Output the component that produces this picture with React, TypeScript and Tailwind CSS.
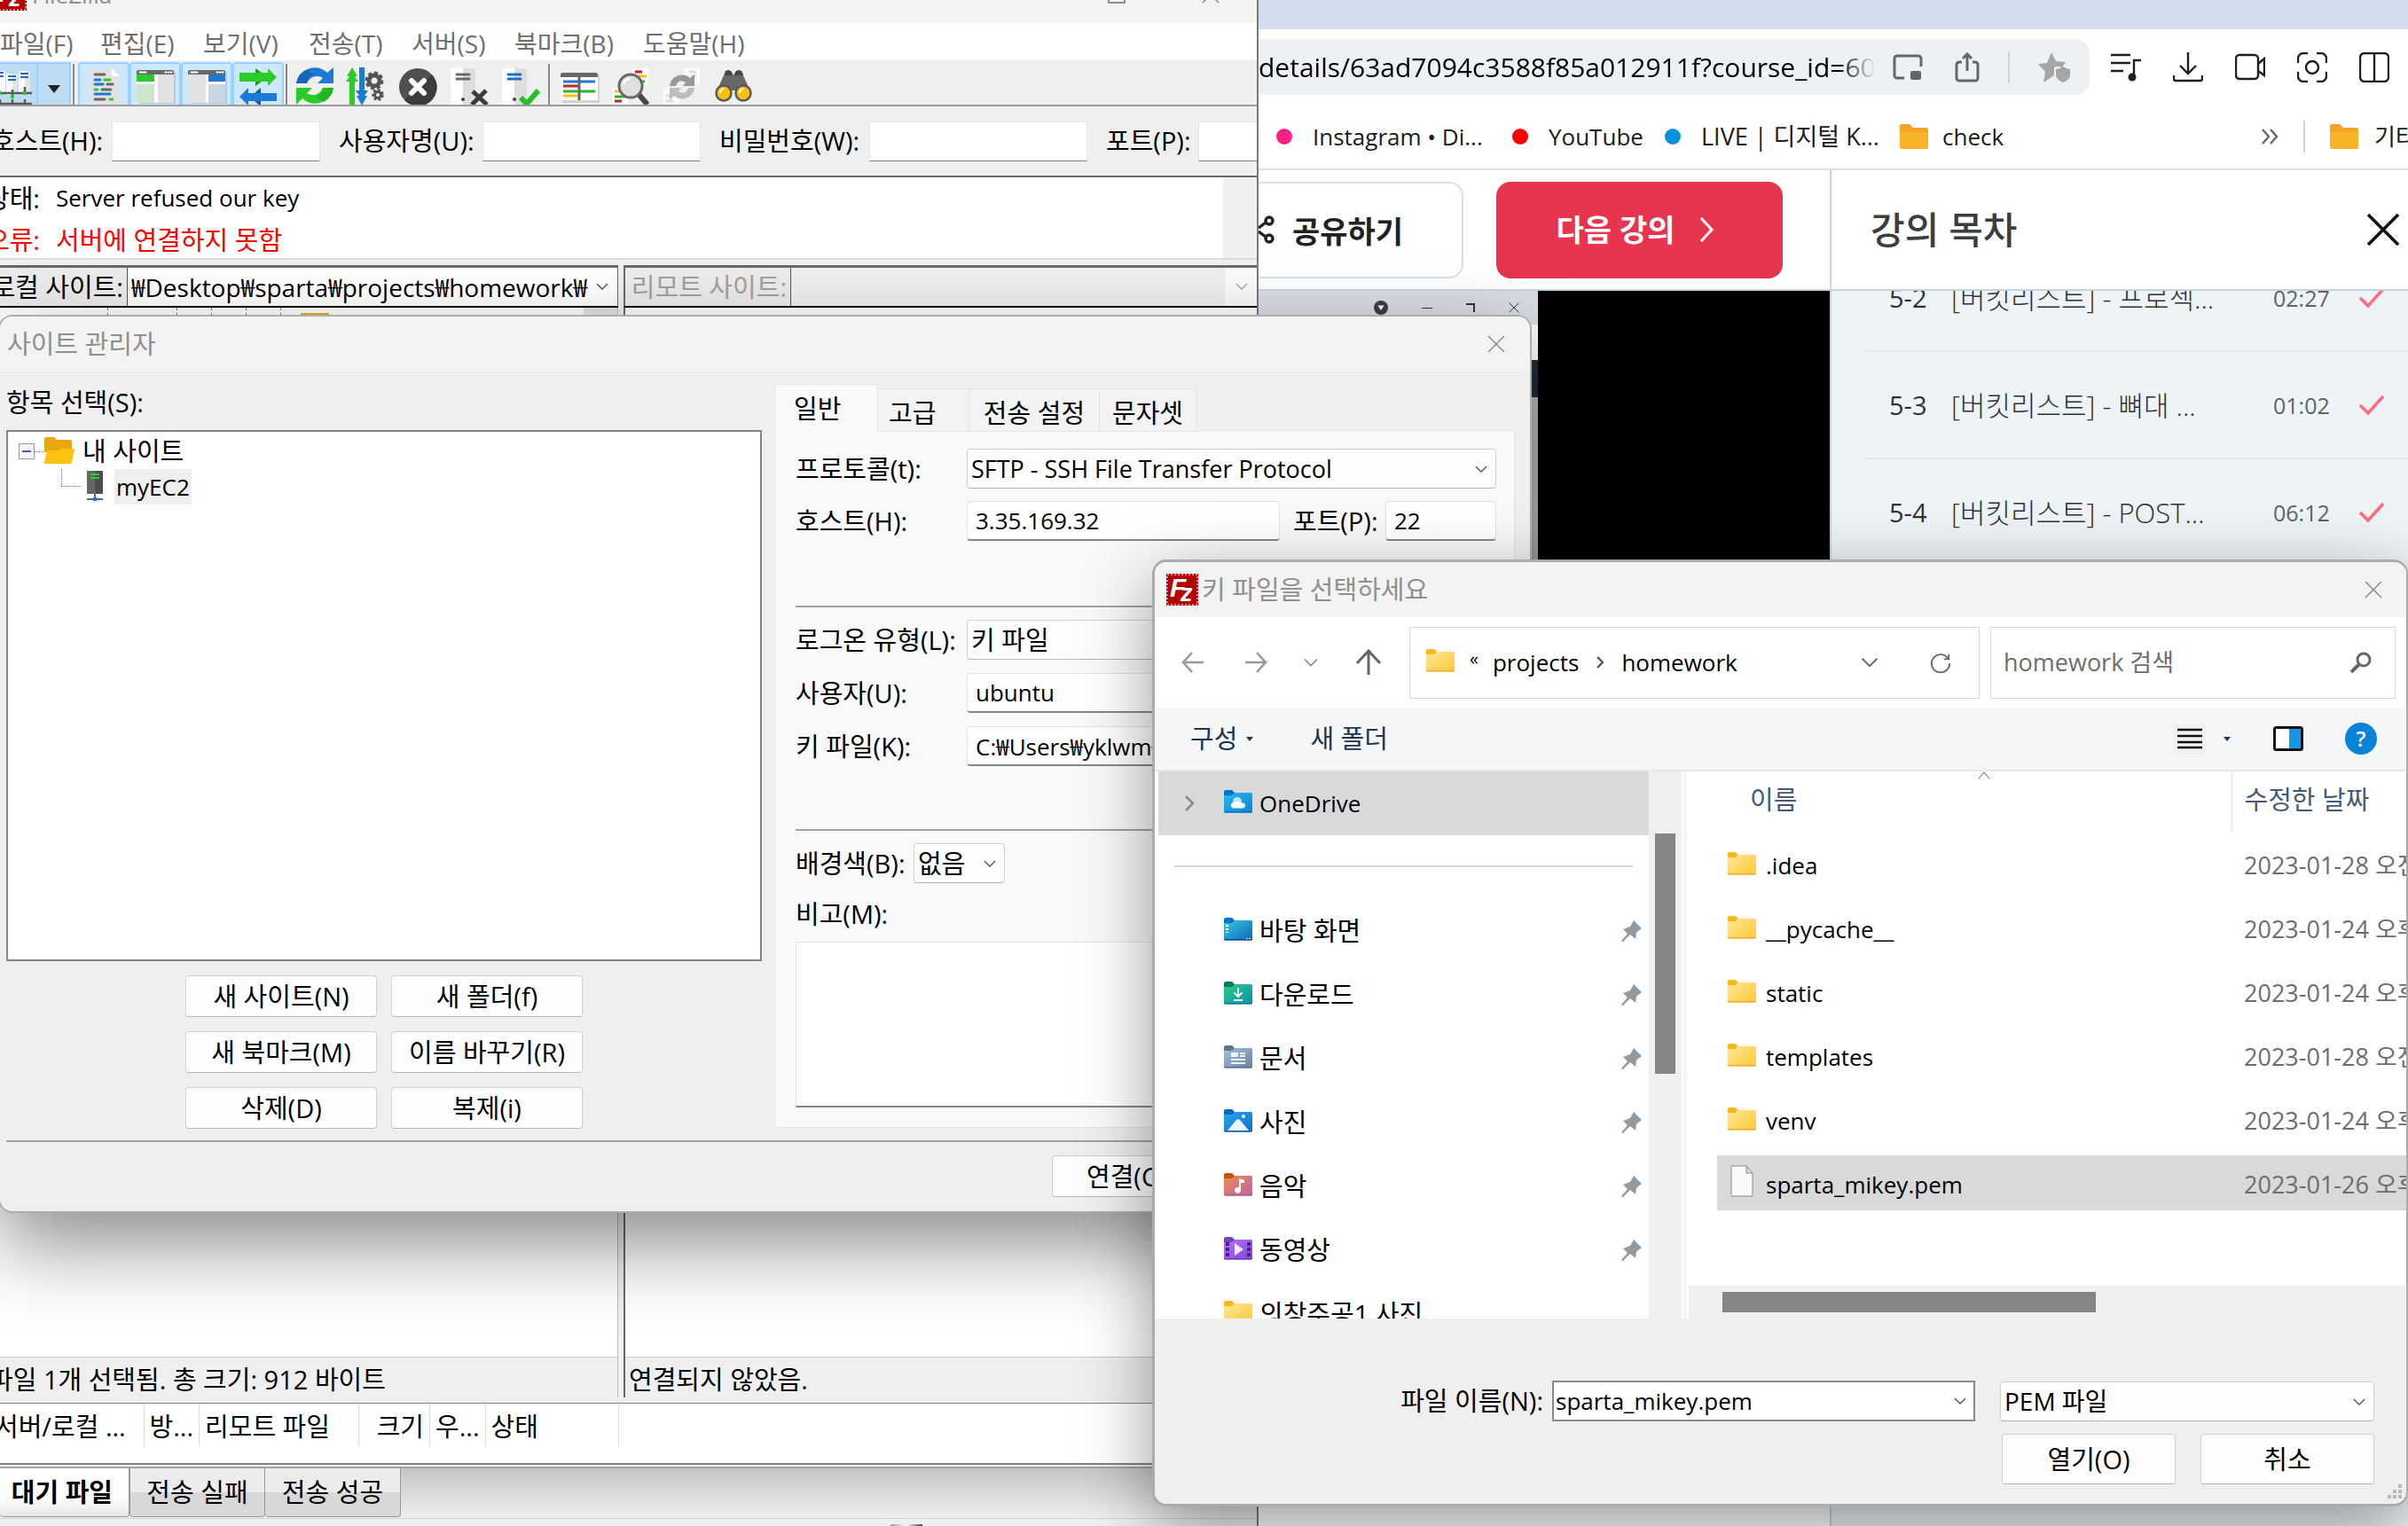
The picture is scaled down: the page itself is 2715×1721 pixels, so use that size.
import type { ReactNode } from "react";

interface TreeItem {
  label: string;
  kind: FolderKind;
  pinned: boolean;
}

type FolderKind = "yellow" | "onedrive" | "desktop" | "download" | "document" | "picture" | "music" | "video";

const menus = [
  { label: "파일(F)", width: "w-[113px]" },
  { label: "편집(E)", width: "w-[116px]" },
  { label: "보기(V)", width: "w-[119px]" },
  { label: "전송(T)", width: "w-[116px]" },
  { label: "서버(S)", width: "w-[116px]" },
  { label: "북마크(B)", width: "w-[145px]" },
  { label: "도움말(H)", width: "w-[140px]" },
];

const quickFields = [
  { id: "qc-host", label: "호스트(H):", labelWidth: "w-[136px]", inputWidth: "w-[235px]" },
  { id: "qc-user", label: "사용자명(U):", labelWidth: "w-[162px]", inputWidth: "w-[246px]" },
  { id: "qc-pass", label: "비밀번호(W):", labelWidth: "w-[169px]", inputWidth: "w-[246px]" },
  { id: "qc-port", label: "포트(P):", labelWidth: "w-[104px]", inputWidth: "w-[120px]" },
];

const queueColumns = [
  { label: "서버/로컬 ...", width: "w-[174px]", align: "text-left" },
  { label: "방...", width: "w-[60px]", align: "text-left" },
  { label: "리모트 파일", width: "w-[180px]", align: "text-left" },
  { label: "크기", width: "w-[80px]", align: "text-right" },
  { label: "우...", width: "w-[60px]", align: "text-left" },
  { label: "상태", width: "w-[150px]", align: "text-left" },
];

const siteButtons = ["새 사이트(N)", "새 폴더(f)", "새 북마크(M)", "이름 바꾸기(R)", "삭제(D)", "복제(i)"];

const places: TreeItem[] = [
  { label: "바탕 화면", kind: "desktop", pinned: true },
  { label: "다운로드", kind: "download", pinned: true },
  { label: "문서", kind: "document", pinned: true },
  { label: "사진", kind: "picture", pinned: true },
  { label: "음악", kind: "music", pinned: true },
  { label: "동영상", kind: "video", pinned: true },
  { label: "의창주공1 사진", kind: "yellow", pinned: false },
];

const files = [
  { name: ".idea", date: "2023-01-28 오전", folder: true },
  { name: "__pycache__", date: "2023-01-24 오후", folder: true },
  { name: "static", date: "2023-01-24 오후", folder: true },
  { name: "templates", date: "2023-01-28 오전", folder: true },
  { name: "venv", date: "2023-01-24 오후", folder: true },
  { name: "sparta_mikey.pem", date: "2023-01-26 오후", folder: false },
];

const lectures = [
  { no: "5-2", title: "[버킷리스트] - 프로젝...", time: "02:27" },
  { no: "5-3", title: "[버킷리스트] - 뼈대 ...", time: "01:02" },
  { no: "5-4", title: "[버킷리스트] - POST...", time: "06:12" },
];

const folderColors: Record<FolderKind, { tab: string; from: string; to: string; edge: string }> = {
  yellow: { tab: "#fbb81b", from: "#ffe69b", to: "#ffc933", edge: "#eab030" },
  onedrive: { tab: "#0072cc", from: "#2cb8ee", to: "#0a85d8", edge: "#0a70be" },
  desktop: { tab: "#0072cc", from: "#37cbe2", to: "#0b66bd", edge: "#0a4d94" },
  download: { tab: "#067a5a", from: "#2fc888", to: "#0794a8", edge: "#08808e" },
  document: { tab: "#5d7690", from: "#a9bfd6", to: "#6482a5", edge: "#56718f" },
  picture: { tab: "#0067bf", from: "#2aa7ec", to: "#0a72cc", edge: "#0862b4" },
  music: { tab: "#bb560f", from: "#f08a4e", to: "#b966a8", edge: "#a7588e" },
  video: { tab: "#7346b4", from: "#b573f4", to: "#8445d8", edge: "#7436c4" },
};

function FolderIcon({ kind = "yellow" }: { kind?: FolderKind }) {
  const c = folderColors[kind];
  return (
    <svg viewBox="0 0 32 26" className="mb-1 h-[26px] w-8 shrink-0" aria-hidden="true">
      <defs>
        <linearGradient id={`folder-${kind}`} x1="0" y1="0" x2="1" y2="1">
          <stop offset="0" stopColor={c.from} />
          <stop offset="1" stopColor={c.to} />
        </linearGradient>
      </defs>
      <path d="M0 2a2 2 0 0 1 2-2h7l3 3v5H0z" fill={c.tab} />
      <path d="M0 6h9l3-3h18.500a1.500 1.500 0 0 1 1.500 1.500V24a1.500 1.500 0 0 1-1.500 1.500h-29A1.500 1.500 0 0 1 0 24z" fill={`url(#folder-${kind})`} />
      <path d="M0 24h32a1.500 1.500 0 0 1-1.500 1.500h-29A1.500 1.500 0 0 1 0 24z" fill={c.edge} />
      {kind === "onedrive" && (
        <>
          <circle cx="15" cy="13" r="5" fill="#bfe6fa" />
          <path d="M10 20.500a3.500 3.500 0 0 1 0-6.500l6-1 5 1.500a3 3 0 0 1 0 6z" fill="#fff" />
        </>
      )}
      {kind === "desktop" && (
        <path d="M2 8h3v2H2zM2 12h3v2H2zM2 16h3v1H2zM25 23h2v1h-2zM28 23h2v1h-2z" fill="#fff" />
      )}
      {kind === "download" && (
        <path d="M16 7v10m-4.500-4.500L16 17l4.500-4.500M11 21h10" fill="none" stroke="#fff" strokeWidth="1.800" />
      )}
      {kind === "document" && (
        <path d="M8 8h8v5H8zM18 8h6v2h-6zM18 11h6v2h-6zM8 15h16v2H8zM8 19h16v2H8z" fill="#f1f6fb" />
      )}
      {kind === "picture" && (
        <>
          <path d="m4 24 10-12q2-2 4 0l10 12z" fill="#eaf5fd" />
          <circle cx="22" cy="8" r="2" fill="#fff" />
        </>
      )}
      {kind === "music" && (
        <path d="M17 6v10a3.500 3.500 0 1 0 2 3V11h4V8z" fill="#fff" />
      )}
      {kind === "video" && (
        <>
          <path d="M2 6h4v4H2zM2 12h4v4H2zM2 18h4v4H2zM26 6h4v4h-4zM26 12h4v4h-4zM26 18h4v4h-4z" fill="#4a1f8c" />
          <path d="m12 7 10 7-10 7z" fill="#f3e9ff" />
        </>
      )}
    </svg>
  );
}

function Chevron({ className }: { className: string }) {
  return (
    <svg viewBox="0 0 16 10" className={className} fill="none" stroke="currentColor" strokeWidth="1.600" aria-hidden="true">
      <path d="m1 1.500 7 7 7-7" />
    </svg>
  );
}

function CloseIcon({ className }: { className: string }) {
  return (
    <svg viewBox="0 0 20 20" className={className} fill="none" stroke="currentColor" strokeWidth="1.600" aria-hidden="true">
      <path d="m1 1 18 18M19 1 1 19" />
    </svg>
  );
}

function BookmarkFolder() {
  return (
    <svg viewBox="0 0 32 28" className="h-7 w-8 shrink-0" aria-hidden="true">
      <path d="M0 2a2 2 0 0 1 2-2h9l4 4h15a2 2 0 0 1 2 2v4H0z" fill="#f6a128" />
      <path d="M0 9h32v17a2 2 0 0 1-2 2H2a2 2 0 0 1-2-2z" fill="#f6b426" />
    </svg>
  );
}

function FzLogo() {
  return (
    <svg viewBox="0 0 36 36" className="size-9 shrink-0" aria-hidden="true">
      <rect x="0" y="0" width="36" height="36" fill="#b30000" />
      <rect x="1" y="1" width="34" height="34" fill="none" stroke="#e08a8a" strokeWidth="2" strokeDasharray="2 2" />
      <g fill="#fff" fontFamily="Liberation Sans, sans-serif" fontWeight="700" fontStyle="italic">
        <text x="4" y="26" fontSize="30">F</text>
        <text x="16" y="31" fontSize="27">z</text>
      </g>
    </svg>
  );
}

function ToolIcon({ children }: { children: ReactNode }) {
  return (
    <svg viewBox="0 0 48 48" className="size-12 shrink-0" aria-hidden="true">
      {children}
    </svg>
  );
}

function ToolButton({ label, pressed, children }: { label: string; pressed?: boolean; children: ReactNode }) {
  return (
    <button
      type="button"
      aria-label={label}
      className={`flex h-14 w-[58px] shrink-0 justify-center border-2 pt-[3px] ${
        pressed ? "rounded-t border-[#99d1ff] bg-[#cce8ff]" : "border-transparent"
      }`}
    >
      <ToolIcon>{children}</ToolIcon>
    </button>
  );
}

function SplitPane({ mirrored }: { mirrored?: boolean }) {
  return (
    <>
      <path d="M5 6h42v36H7z" fill="#000" opacity=".12" />
      <rect x="3" y="4" width="42" height="37" rx="2" fill="#e2e2e2" />
      <path d="M3 9V6a2 2 0 0 1 2-2h38a2 2 0 0 1 2 2v3z" fill="#686868" />
      <path d="M6 6h8v1H6zM35 6h2v1h-2zM38 6h2v1h-2zM41 6h2v1h-2z" fill="#fff" stroke="#fff" />
      {mirrored ? (
        <>
          <path d="M23 9h3v32h-3zM25 17h20v3H25z" fill="#fff" />
          <path d="M26 9h19v8H26z" fill="#1c7ad6" />
          <path d="M26 20h19v21H26z" fill="#c9d6e3" />
        </>
      ) : (
        <>
          <path d="M23 9h4v32h-4zM3 17h21v3H3z" fill="#fff" />
          <path d="M3 9h20v8H3z" fill="#2bcb2b" />
          <path d="M3 20h20v21H3z" fill="#cce5cc" />
        </>
      )}
    </>
  );
}

function Toolbar() {
  return (
    <div className="flex h-[50px] shrink-0 items-start overflow-hidden bg-[#efefef] pt-0.5">
      <button type="button" aria-label="사이트 관리자 열기" className="h-14 w-[43px] shrink-0 overflow-hidden border-2 border-l-0 border-[#99d1ff] bg-[#bcdcf4]">
        <ToolIcon>
          <path d="M-6 6H6v25H-6zM7 9h13v24H7zM21 6h13v25H21z" fill="#fff" />
          <path d="M14 9h6v24h-6zM28 6h6v25h-6z" fill="#e4e4e4" />
          <path d="M0 8h4M0 12h4M9 12h9M9 16h9M23 9h9M23 13h9" stroke="#1c6fc4" strokeWidth="2" />
          <path d="M0 31h36M14 27v8M28 24v6M0 43h36M0 38v8M14 38v8M28 38v8" stroke="#5a5a5a" strokeWidth="2.500" />
          <path d="M12 33h4v4h-4zM26 29h4v4h-4zM-2 29h4v4h-4z" fill="#2bcb2b" />
        </ToolIcon>
      </button>
      <button type="button" aria-label="최근 사이트" className="flex h-14 w-[37px] shrink-0 justify-center border-2 border-l-0 border-[#99d1ff] bg-[#bcdcf4] pt-6">
        <svg viewBox="0 0 14 9" className="h-[9px] w-3.5" aria-hidden="true">
          <path d="M0 0h14L7 9z" fill="#222" />
        </svg>
      </button>
      <span className="mr-1 ml-0.5 mt-0.5 h-12 w-0.5 shrink-0 bg-[#8c8c8c]" />
      <ToolButton label="메시지 로그" pressed>
        <path d="M8 2h26l8 8v38H8z" fill="#e2e2e2" />
        <path d="m33 2 9 9h-9z" fill="#fff" />
        <g strokeWidth="3" strokeLinecap="round">
          <path d="M14 9h11M28 20h6M22 26h10M14 37h11" stroke="#686868" />
          <path d="M14 15h6M14 20h9M14 31h17" stroke="#1c7ad6" />
          <path d="M25 15h6M14 26h3M31 37h3" stroke="#2bcb2b" />
        </g>
      </ToolButton>
      <ToolButton label="로컬 트리" pressed>
        <SplitPane />
      </ToolButton>
      <ToolButton label="리모트 트리" pressed>
        <SplitPane mirrored />
      </ToolButton>
      <ToolButton label="전송 대기열" pressed>
        <path d="M3 7h18V2l6 5h8V2l10 10-10 10v-5h-8l-6 5v-5H3z" fill="#2bcb2b" />
        <path d="M21 2l7 5h-7zM21 22l7-5h-7z" fill="#1f9c1f" />
        <path d="M45 30H27v-5l-6 5h-8v-6L3 34l10 10v-5h8l6 5v-5h18z" fill="#1c7ad6" />
        <path d="M27 24v6h-7zM27 45v-6h-7z" fill="#1659a8" />
      </ToolButton>
      <span className="mr-0.5 ml-0.5 mt-0.5 h-12 w-0.5 shrink-0 bg-[#8c8c8c]" />
      <ToolButton label="새로 고침">
        <path d="M3 19A21 21 0 0 1 38 7l7-6v18H27l6-6a12 12 0 0 0-18 6z" fill="#1c7ad6" />
        <path d="M3 19A21 21 0 0 1 14 4l9 5a12 12 0 0 0-8 10z" fill="#1765b8" />
        <path d="M45 24A21 21 0 0 1 10 36l-7 7V24h18l-6 6a12 12 0 0 0 18-6z" fill="#2bcb2b" />
        <path d="M45 24A21 21 0 0 1 34 40l-9-6a12 12 0 0 0 8-10z" fill="#27b527" />
      </ToolButton>
      <ToolButton label="대기열 처리">
        <path d="M5 48V17H1l4-6H2l6-10 6 10h-3l4 6h-4v31z" fill="#2bcb2b" />
        <path d="M16 1v26h-4l4 6h-3l6 11 6-11h-3l4-6h-4V1z" fill="#1c7ad6" />
        <circle cx="33" cy="16" r="6" fill="none" stroke="#555" strokeWidth="5" />
        <circle cx="33" cy="16" r="9" fill="none" stroke="#555" strokeWidth="3" strokeDasharray="4 3" />
        <circle cx="37" cy="32" r="3.500" fill="none" stroke="#555" strokeWidth="3" />
        <circle cx="37" cy="32" r="5.500" fill="none" stroke="#555" strokeWidth="2.500" strokeDasharray="3 2" />
      </ToolButton>
      <ToolButton label="취소">
        <circle cx="24" cy="23" r="21" fill="#505050" />
        <path d="M40 9A21 21 0 0 1 9 38z" fill="#3c3c3c" />
        <path d="m17 16 14 14M31 16 17 30" stroke="#fff" strokeWidth="6" strokeLinecap="round" />
      </ToolButton>
      <ToolButton label="연결 끊기">
        <path d="M3 2h14v46H3z" fill="#fff" />
        <path d="M17 2h14v46H17z" fill="#dedede" />
        <path d="M10 9h14M10 14h14" stroke="#686868" strokeWidth="3" strokeLinecap="round" />
        <circle cx="17" cy="37" r="2" fill="#444" />
        <path d="m28 28 16 15M43 27 27 43" stroke="#3c3c3c" strokeWidth="5" />
      </ToolButton>
      <ToolButton label="다시 연결">
        <path d="M3 2h14v46H3z" fill="#fff" />
        <path d="M17 2h14v46H17z" fill="#dedede" />
        <path d="M10 9h14M10 14h14" stroke="#1c6fc4" strokeWidth="3" strokeLinecap="round" />
        <circle cx="17" cy="37" r="2" fill="#444" />
        <path d="m24 35 7 7 13-15" fill="none" stroke="#2bbb2b" strokeWidth="6" />
      </ToolButton>
      <span className="mr-1 ml-0.5 mt-0.5 h-12 w-0.5 shrink-0 bg-[#8c8c8c]" />
      <ToolButton label="파일 목록 필터">
        <path d="M5 9h42v32H5z" fill="#000" opacity=".12" />
        <path d="M3 7h42v31H3z" fill="#fff" />
        <path d="M3 12V9a2 2 0 0 1 2-2h38a2 2 0 0 1 2 2v3z" fill="#686868" />
        <g strokeWidth="3">
          <path d="M6 17h36" stroke="#1c7ad6" />
          <path d="M6 22h17" stroke="#c4202e" />
          <path d="M6 28h36" stroke="#28b828" />
          <path d="M6 33h17" stroke="#ffbf10" />
          <path d="M24 12v26" stroke="#686868" />
        </g>
      </ToolButton>
      <ToolButton label="디렉터리 비교">
        <path d="M26 2h18v19H26zM3 24h18v24H3z" fill="#fff" />
        <g strokeWidth="3">
          <path d="M29 6h8M6 39h8" stroke="#c4202e" />
          <path d="M32 11h10M6 28h8" stroke="#ffbf10" />
          <path d="M34 17h6M6 34h12" stroke="#28b828" />
        </g>
        <path d="m32 30 11 13" stroke="#484848" strokeWidth="6" />
        <circle cx="24" cy="22" r="13" fill="#dfdfdf" stroke="#686868" strokeWidth="3" />
        <path d="M16 20q2-6 7-6" fill="none" stroke="#fff" strokeWidth="2.500" />
      </ToolButton>
      <ToolButton label="동기화 탐색">
        <path d="M26 2h18v19H26zM3 24h18v24H3z" fill="#fafafa" />
        <path d="M32 6h8M34 11h6M6 33h8M6 39h8" stroke="#dcdcdc" strokeWidth="3" />
        <path d="M10 22A14 14 0 0 1 33 13l5-4v13H25l3-4q-8-5-11 4z" fill="#999" />
        <path d="M38 24A14 14 0 0 1 15 33l-5 5V24h13l-3 4q8 5 11-4z" fill="#bdbdbd" />
      </ToolButton>
      <ToolButton label="파일 찾기">
        <path d="m13 10 2-5h6l3 5 3-5h6l2 5 9 20-10 5-8-8h-4l-8 8-10-5z" fill="#686868" />
        <path d="M14 10q0-6 4-6t5 6M25 10q1-6 5-6t5 6" fill="#444" />
        <circle cx="13" cy="30" r="8.500" fill="#ffbf10" stroke="#5a5a5a" strokeWidth="2.500" />
        <circle cx="35" cy="30" r="8.500" fill="#ffbf10" stroke="#5a5a5a" strokeWidth="2.500" />
        <path d="M9 30q0-4 4-5M31 30q0-4 4-5" fill="none" stroke="#fff" strokeWidth="2" />
      </ToolButton>
    </div>
  );
}

function FileZillaWindow() {
  return (
    <section className="flex h-full w-[1419px] shrink-0 flex-col overflow-hidden border-r-2 border-[#7a7a7a] bg-[#efefef] whitespace-nowrap">
      <header className="flex h-[26px] shrink-0 items-end bg-[#f3f3f3] text-[#8f8f8f]">
        <div className="-ml-1.5 flex flex-1 items-center gap-1.5 pb-3.5">
          <FzLogo />
          <span className="text-[26px] leading-9">FileZilla</span>
        </div>
        <div className="flex items-end gap-[86px] pr-[42px] pb-[22px]">
          <span className="size-5 border-2 border-[#8f8f8f]" />
          <CloseIcon className="size-5" />
        </div>
      </header>
      <nav className="flex h-[42px] shrink-0 items-center bg-white pt-1 text-[28px] text-[#6e6e6e]">
        {menus.map((menu) => (
          <button key={menu.label} type="button" className={`shrink-0 text-left ${menu.width}`}>
            {menu.label}
          </button>
        ))}
      </nav>
      <Toolbar />
      <form className="flex h-20 shrink-0 items-center border-t-2 border-[#9c9c9c]">
        <div className="-ml-2.5 flex gap-[21px]">
          {quickFields.map((field) => (
            <div key={field.id} className="flex items-center">
              <label htmlFor={field.id} className={`shrink-0 ${field.labelWidth}`}>
                {field.label}
              </label>
              <input id={field.id} className={`h-[45px] border border-[#e6e6e6] border-b-[#808080] bg-white ${field.inputWidth}`} />
            </div>
          ))}
        </div>
      </form>
      <div className="flex h-[95px] shrink-0 border-y-2 border-t-[#686868] border-b-[#dcdcdc] bg-white">
        <dl className="-ml-4 grid flex-1 grid-cols-[79px_1fr] content-start leading-[47px]">
          <dt>상태:</dt>
          <dd className="text-[26px]">Server refused our key</dd>
          <dt className="text-[#f00]">오류:</dt>
          <dd className="text-[#f00]">서버에 연결하지 못함</dd>
        </dl>
        <span className="w-[38px] bg-[#f0f0f0]" />
      </div>
      <div className="mt-1.5 flex shrink-0 gap-1.5">
        <div className="flex h-12 w-[697px] border-t-[3px] border-r border-b-2 border-[#696969] border-b-black bg-white">
          <label htmlFor="local-site" className="flex w-36 shrink-0 items-center justify-end border-r border-[#555] bg-[#ececec] pr-1">
            로컬 사이트:
          </label>
          <div className="relative flex-1">
            <select id="local-site" className="size-full appearance-none pl-1 text-[28px]">
              <option>₩Desktop₩sparta₩projects₩homework₩</option>
            </select>
            <Chevron className="absolute top-4 right-2.5 h-2.5 w-3.5 text-[#555]" />
          </div>
        </div>
        <div className="flex h-12 flex-1 border-t-[3px] border-b-2 border-l-2 border-[#696969] border-b-black">
          <label htmlFor="remote-site" className="flex w-[187px] shrink-0 items-center justify-end border-r border-[#555] bg-[#ececec] pr-1 text-[#a0a0a0]">
            리모트 사이트:
          </label>
          <div className="relative flex-1 bg-[#efefef]">
            <select id="remote-site" disabled className="size-full appearance-none border-r-[36px] border-[#fafafa]">
              <option></option>
            </select>
            <Chevron className="absolute top-4 right-2.5 h-2.5 w-3.5 text-[#aaa]" />
          </div>
        </div>
      </div>
      <div className="flex min-h-0 flex-1 gap-1.5">
        <div className="flex w-[697px] flex-col border-r border-[#bbb] bg-white">
          <div className="flex flex-1 items-start">
            <div className="flex flex-1 items-start gap-[38px] pl-[121px]">
              <span className="h-5 w-10 border-l border-dashed border-[#777]" />
              <span className="h-5 border-l border-dashed border-[#777]" />
              <span className="h-5 border-l border-dashed border-[#777]" />
              <span className="h-5 border-l border-dashed border-[#777]" />
              <span className="h-5 border-l border-dashed border-[#777]" />
              <span className="-ml-4 mt-1.5 h-4 w-8 bg-[#e8ac1a]" />
            </div>
            <span className="h-5 w-[38px] bg-[#e3e3e3]" />
          </div>
          <p className="h-[46px] border-t border-[#c8c8c8] bg-[#efefef] leading-[50px]">
            <span className="-ml-3">파일 1개 선택됨. 총 크기: 912 바이트</span>
          </p>
        </div>
        <div className="flex flex-1 flex-col border-l-2 border-[#696969] bg-white">
          <div className="flex-1" />
          <p className="h-[46px] border-t border-[#c8c8c8] bg-[#efefef] pl-1 leading-[50px]">연결되지 않았음.</p>
        </div>
      </div>
      <div className="mt-1.5 h-[70px] shrink-0 border-t border-b-2 border-[#808088] bg-white">
        <table className="-ml-3 table-fixed">
          <thead>
            <tr className="h-12">
              {queueColumns.map((column) => (
                <th key={column.label} className={`overflow-hidden border-r border-[#dedede] px-1.5 pt-1 font-normal ${column.width} ${column.align}`}>
                  {column.label}
                </th>
              ))}
            </tr>
          </thead>
        </table>
      </div>
      <div role="tablist" className="mt-0.5 flex h-[59px] shrink-0 items-start border-t-2 border-b border-t-[#a0a0a0] border-b-[#d4d4d4] bg-linear-to-b from-[#c6c6c6] to-[#efefef]">
        <button role="tab" aria-selected="true" type="button" className="h-[55px] w-[146px] rounded-b-sm border-r border-b border-[#999] bg-linear-to-b from-white from-60% to-[#e6e6e6] pr-[18px] text-right font-bold">
          대기 파일
        </button>
        <button role="tab" type="button" className="h-[55px] w-[153px] rounded-b-sm border-x border-b border-[#999] bg-linear-to-b from-[#ececec] from-50% to-[#d8d8d8] to-50%">
          전송 실패
        </button>
        <button role="tab" type="button" className="h-[55px] w-[153px] rounded-b-sm border-r border-b border-[#999] bg-linear-to-b from-[#ececec] from-50% to-[#d8d8d8] to-50%">
          전송 성공
        </button>
      </div>
      <footer className="flex h-2 shrink-0 items-end pl-[1004px]">
        <span className="h-0.5 w-9 bg-linear-to-r from-[#999] via-white to-[#444]" />
      </footer>
    </section>
  );
}

function Browser() {
  return (
    <section className="flex h-full min-w-0 flex-1 flex-col bg-white whitespace-nowrap">
      <div className="h-[33px] shrink-0 bg-[#d3ddf0]" />
      <div className="flex h-[85px] shrink-0 items-center gap-6 pr-[21px]">
        <div className="flex h-[63px] flex-1 items-center rounded-r-2xl bg-[#edf1f4] pr-5">
          <input
            aria-label="주소창"
            defaultValue="details/63ad7094c3588f85a012911f?course_id=60"
            className="min-w-0 flex-1 mask-r-from-94% text-[30px]"
          />
          <svg viewBox="0 0 34 32" className="ml-5 h-8 w-[34px] shrink-0" fill="none" stroke="#666" strokeWidth="3" aria-hidden="true">
            <path d="M13 28H5a3 3 0 0 1-3-3V6a3 3 0 0 1 3-3h24a3 3 0 0 1 3 3v9" />
            <rect x="20" y="20" width="12" height="10" rx="2" fill="#666" stroke="none" />
          </svg>
          <svg viewBox="0 0 28 34" className="ml-9 h-[34px] w-7 shrink-0" fill="none" stroke="#666" strokeWidth="3" aria-hidden="true">
            <path d="M8 11H5a3 3 0 0 0-3 3v15a3 3 0 0 0 3 3h18a3 3 0 0 0 3-3V14a3 3 0 0 0-3-3h-3M14 21V3M9 7l5-5 5 5" />
          </svg>
          <span className="ml-8 h-9 w-0.5 shrink-0 bg-[#cfd4d8]" />
          <svg viewBox="0 0 38 34" className="ml-8 h-[34px] w-[38px] shrink-0" fill="#a6a6a6" aria-hidden="true">
            <path d="m15 0 5 10 11 1-4 6q-5-2-9 0v9l-3 2-9 6 2-12-8-9 10-1z" />
            <path d="M20 19q4 0 8-3 4 3 8 3v6q0 6-8 9-8-3-8-9z" />
          </svg>
        </div>
        <div className="flex shrink-0 items-center gap-9 text-[#1f1f1f]">
          <svg viewBox="0 0 34 34" className="size-[34px]" fill="none" stroke="currentColor" strokeWidth="2.400" aria-hidden="true">
            <path d="M0 3h22M0 12h22M0 21h14M26 28V9h8" />
            <circle cx="24" cy="28" r="4.500" fill="currentColor" stroke="none" />
          </svg>
          <svg viewBox="0 0 34 34" className="size-[34px]" fill="none" stroke="currentColor" strokeWidth="2.400" aria-hidden="true">
            <path d="M17 0v23M8 15l9 9 9-9M1 26v4a2 2 0 0 0 2 2h28a2 2 0 0 0 2-2v-4" />
          </svg>
          <svg viewBox="0 0 34 34" className="size-[34px]" fill="none" stroke="currentColor" strokeWidth="2.400" aria-hidden="true">
            <rect x="1" y="3" width="25" height="27" rx="4" />
            <path d="m26 13 7-6v19l-7-5" />
          </svg>
          <svg viewBox="0 0 34 34" className="size-[34px]" fill="none" stroke="currentColor" strokeWidth="2.400" aria-hidden="true">
            <path d="M1 12V7a6 6 0 0 1 6-6h5M22 1h5a6 6 0 0 1 6 6v5M33 22v5a6 6 0 0 1-6 6h-5M12 33H7a6 6 0 0 1-6-6v-5" />
            <circle cx="17" cy="17" r="7" />
          </svg>
          <svg viewBox="0 0 34 34" className="size-[34px]" fill="none" stroke="currentColor" strokeWidth="2.400" aria-hidden="true">
            <rect x="1" y="1" width="32" height="32" rx="5" />
            <path d="M17 1v32" />
          </svg>
        </div>
      </div>
      <nav className="flex h-[74px] shrink-0 items-center overflow-hidden border-b-2 border-[#dae1e7] pl-5 text-[26px] text-[#1b1b1b]">
        <span className="size-[18px] shrink-0 rounded-full bg-[#ff1f84]" />
        <a href="#instagram" className="w-[248px] shrink-0 pl-[23px]">Instagram • Di...</a>
        <span className="size-[18px] shrink-0 rounded-full bg-[#f00]" />
        <a href="#youtube" className="w-[154px] shrink-0 pl-[23px]">YouTube</a>
        <span className="size-[18px] shrink-0 rounded-full bg-[#0a8fdb]" />
        <a href="#live" className="w-[247px] shrink-0 pl-[23px] text-[27px]">LIVE | 디지털 K...</a>
        <BookmarkFolder />
        <a href="#check" className="flex-1 pl-4">check</a>
        <svg viewBox="0 0 20 20" className="size-5 shrink-0" fill="none" stroke="#666" strokeWidth="2.400" aria-hidden="true">
          <path d="m2 2 7 8-7 8M11 2l7 8-7 8" />
        </svg>
        <span className="mx-7 h-9 w-0.5 shrink-0 bg-[#cdd2d6]" />
        <BookmarkFolder />
        <a href="#others" className="w-14 shrink-0 overflow-hidden pl-[18px]">기타</a>
      </nav>
      <div className="flex min-h-0 flex-1">
        <main className="flex min-w-0 flex-1 flex-col">
          <div className="flex h-[136px] shrink-0 items-center gap-[37px] border-b-2 border-[#c9d4dc]">
            <button type="button" className="flex h-[109px] w-[231px] items-center gap-5 rounded-r-2xl border-2 border-l-0 border-[#d6e0e8] pt-1 text-[34px] font-semibold text-[#1d2226]">
              <svg viewBox="0 0 18 32" className="mb-1 h-8 w-[18px] shrink-0" fill="none" stroke="currentColor" strokeWidth="3.400" aria-hidden="true">
                <circle cx="12" cy="6" r="4" />
                <circle cx="12" cy="26" r="4" />
                <path d="m8 8-8 6M8 24l-8-6" />
              </svg>
              공유하기
            </button>
            <button type="button" className="flex h-[109px] w-[323px] items-center justify-center gap-7 rounded-2xl bg-[#e8344e] pr-2.5 text-[34px] font-semibold text-white">
              다음 강의
              <svg viewBox="0 0 16 28" className="h-7 w-4" fill="none" stroke="currentColor" strokeWidth="3" aria-hidden="true">
                <path d="m2 1 12 13L2 27" />
              </svg>
            </button>
          </div>
          <div className="flex min-h-0 flex-1">
            <div className="flex flex-1 flex-col">
              <div className="flex h-[38px] shrink-0 items-center justify-end gap-[38px] bg-[#d9dde6] pr-[21px] text-[#333]">
                <svg viewBox="0 0 16 16" className="size-4" aria-hidden="true">
                  <circle cx="8" cy="8" r="8" fill="#3b3f45" />
                  <path d="M4.500 5.500h7L8 11z" fill="#fff" />
                </svg>
                <span className="h-px w-3 bg-[#333]" />
                <span className="size-2.5 border-t-2 border-r-2 border-[#333]" />
                <CloseIcon className="size-3" />
              </div>
              <div className="h-10 shrink-0 bg-white" />
              <div className="h-[42px] shrink-0 bg-[#1f2a3a]" />
              <div className="h-[1000px] shrink-0 bg-[#b9bcc0]" />
            </div>
            <div className="mb-16 w-[329px] bg-black" />
          </div>
        </main>
        <aside className="flex w-[652px] shrink-0 flex-col border-l-2 border-[#c9d4dc] bg-[#eef3f6]">
          <div className="flex h-[136px] shrink-0 items-center justify-between border-b-2 border-[#c9d4dc] bg-white pr-2.5 pl-11 text-[#3a3e41]">
            <h2 className="text-[42px] font-medium">강의 목차</h2>
            <svg viewBox="0 0 36 36" className="size-9" fill="none" stroke="#111" strokeWidth="3.600" aria-label="닫기">
              <path d="m1 1 34 34M35 1 1 35" />
            </svg>
          </div>
          <div className="min-h-0 flex-1 overflow-hidden">
            <ul className="-mt-[52px] pl-[37px] text-[31px] text-[#2d3236]">
              {lectures.map((lecture) => (
                <li key={lecture.no} className="flex h-[121px] items-center border-b-2 border-[#e1e7ea] pl-7">
                  <span className="w-[70px] shrink-0 text-[29px]">{lecture.no}</span>
                  <span className="flex-1 font-light">{lecture.title}</span>
                  <span className="w-24 shrink-0 text-[25px] text-[#5d6368]">{lecture.time}</span>
                  <svg viewBox="0 0 30 24" className="mr-[26px] h-6 w-[30px] shrink-0" fill="none" stroke="#ff6b7f" strokeWidth="3.600" aria-hidden="true">
                    <path d="m2 12 9 9L28 2" />
                  </svg>
                </li>
              ))}
            </ul>
          </div>
        </aside>
      </div>
    </section>
  );
}

function Field({ id, label, children }: { id: string; label: string; children: ReactNode }) {
  return (
    <div className="flex h-[45px] items-center">
      <label htmlFor={id} className="w-[193px] shrink-0">
        {label}
      </label>
      {children}
    </div>
  );
}

const inputClass = "h-[45px] min-w-0 flex-1 rounded-sm border border-b-2 border-[#e3e3e3] border-b-[#868686] bg-white px-[9px] text-[26px]";
const buttonClass = "rounded border border-[#d0d0d0] border-b-[#b8b8b8] bg-[#fdfdfd]";

function SelectBox({ id, value, label, className }: { id: string; value: string; label?: string; className: string }) {
  return (
    <div className={`relative h-[45px] ${className}`}>
      <select id={id} aria-label={label} className="size-full appearance-none rounded-sm border border-[#d0d0d0] border-b-[#b4b4b4] bg-[#fdfdfd] pl-1">
        <option>{value}</option>
      </select>
      <Chevron className="pointer-events-none absolute top-[18px] right-2.5 h-2.5 w-3.5 text-[#555]" />
    </div>
  );
}

function SiteManager() {
  return (
    <section
      role="dialog"
      aria-label="사이트 관리자"
      className="absolute top-[355px] -left-0.5 flex h-[1013px] w-[1729px] flex-col overflow-hidden rounded-2xl border-2 border-[#adadad] bg-[#efefef] whitespace-nowrap shadow-[0_36px_90px_rgba(0,0,0,0.45)]"
    >
      <header className="flex h-[62px] shrink-0 items-center justify-between bg-[#f3f3f3] pr-7 pl-2 text-[#8f8f8f]">
        <h2>사이트 관리자</h2>
        <button type="button" aria-label="닫기">
          <CloseIcon className="size-5" />
        </button>
      </header>
      <div className="flex flex-1 gap-3.5 pr-[17px] pl-[7px]">
        <div className="flex w-[852px] shrink-0 flex-col">
          <h3 className="h-[66px] pt-3 leading-[46px]">항목 선택(S):</h3>
          <ul className="h-[599px] border-2 border-[#84848c] bg-white pt-0.5 pl-3">
            <li className="flex h-10 items-center">
              <span className="flex size-[18px] items-center justify-center border border-[#999] bg-[#f4f4f4]">
                <span className="h-0.5 w-2.5 bg-[#4660a8]" />
              </span>
              <span className="w-2.5 border-t border-dotted border-[#777]" />
              <svg viewBox="0 0 36 32" className="h-8 w-9" aria-hidden="true">
                <path d="M1 2q0-2 2-2h9l3 3h15q2 0 2 2v12H1z" fill="#e6a712" />
                <path d="M4 15h14l3-2h14l-3 15q0 2-3 2H2q-2 0-1-2z" fill="#ffc20e" />
              </svg>
              <span className="pl-2">내 사이트</span>
            </li>
            <li className="flex h-10 items-center pl-12">
              <span className="mb-5 h-5 w-[22px] border-b border-l border-dotted border-[#777]" />
              <svg viewBox="0 0 20 36" className="ml-1.5 h-9 w-5" aria-hidden="true">
                <path d="M1 0h18v26H1z" fill="#4d4d4d" />
                <path d="M1 0h9v26H1z" fill="#666" />
                <path d="M5 4h10M5 8h10" stroke="#2bcb2b" strokeWidth="2" />
                <path d="M10 22v10M1 32h18" stroke="#666" strokeWidth="2" />
                <path d="M8 30h4v4H8z" fill="#1c7ad6" />
              </svg>
              <span className="ml-3 h-10 bg-[#efefef] px-0.5 text-[26px] leading-10">myEC2</span>
            </li>
          </ul>
          <div className="mt-4 grid grid-cols-[216px_216px] gap-4 pl-[202px]">
            {siteButtons.map((label) => (
              <button key={label} type="button" className={`h-[47px] ${buttonClass}`}>
                {label}
              </button>
            ))}
          </div>
        </div>
        <div className="flex min-w-0 flex-1 flex-col pt-3.5">
          <div role="tablist" className="flex h-[54px] items-end">
            <button role="tab" aria-selected="true" type="button" className="h-[54px] w-[117px] border border-b-0 border-[#e4e4e4] bg-[#f9f9f9] pl-[21px] text-left">일반</button>
            <button role="tab" type="button" className="h-[49px] w-[103px] border border-l-0 border-[#e4e4e4] bg-[#f3f3f3] pt-1.5 pl-3 text-left">고급</button>
            <button role="tab" type="button" className="h-[49px] w-[147px] border border-l-0 border-[#e4e4e4] bg-[#f3f3f3] pt-1.5">전송 설정</button>
            <button role="tab" type="button" className="h-[49px] w-[109px] border border-l-0 border-[#e4e4e4] bg-[#f3f3f3] pt-1.5">문자셋</button>
          </div>
          <div className="flex h-[785px] flex-col border border-t-0 border-[#e4e4e4] bg-[#f9f9f9] pt-[19px] pr-5 pl-[23px]">
            <Field id="protocol" label="프로토콜(t):">
              <SelectBox id="protocol" value="SFTP - SSH File Transfer Protocol" className="flex-1 text-[27px]" />
            </Field>
            <div className="mt-3.5">
              <Field id="host" label="호스트(H):">
                <input id="host" defaultValue="3.35.169.32" className={inputClass} />
                <label htmlFor="port" className="w-[119px] shrink-0 pl-[15px]">포트(P):</label>
                <input id="port" defaultValue="22" className="h-[45px] w-[125px] rounded-sm border border-b-2 border-[#e3e3e3] border-b-[#868686] bg-white px-[9px] text-[26px]" />
              </Field>
            </div>
            <hr className="mt-[73px] border-t-2 border-[#a0a0a0]" />
            <div className="mt-3.5 flex flex-col gap-[15px]">
              <Field id="logon" label="로그온 유형(L):">
                <SelectBox id="logon" value="키 파일" className="flex-1" />
              </Field>
              <Field id="user" label="사용자(U):">
                <input id="user" defaultValue="ubuntu" className={inputClass} />
              </Field>
              <Field id="key" label="키 파일(K):">
                <input id="key" defaultValue="C:₩Users₩yklwm₩Desktop" className={inputClass} />
              </Field>
            </div>
            <hr className="mt-[71px] border-t-2 border-[#a0a0a0]" />
            <div className="mt-3.5 flex items-center">
              <label htmlFor="bgcolor" className="w-[133px]">배경색(B):</label>
              <SelectBox id="bgcolor" value="없음" className="w-[103px]" />
            </div>
            <label htmlFor="notes" className="mt-3 leading-[46px]">비고(M):</label>
            <textarea id="notes" className="mt-2 h-[187px] resize-none border border-b-2 border-[#e3e3e3] border-b-[#868686] bg-white" />
          </div>
        </div>
      </div>
      <footer className="ml-[7px] flex h-20 shrink-0 items-start border-t-2 border-[#a0a0a0] pt-[15px] pl-[1179px]">
        <button type="button" className={`h-[47px] w-[216px] pl-[38px] text-left ${buttonClass}`}>연결(C)</button>
      </footer>
    </section>
  );
}

function FileDialog() {
  return (
    <section
      role="dialog"
      aria-label="키 파일을 선택하세요"
      className="absolute top-[631px] right-0 left-[1299px] flex h-[1068px] flex-col overflow-hidden rounded-2xl border-[3px] border-r-2 border-[#a9abac] bg-[#efefef] whitespace-nowrap shadow-[0_24px_80px_rgba(0,0,0,0.4)]"
    >
      <header className="flex h-[62px] shrink-0 items-center bg-[#f3f3f3] pr-[27px] pl-[13px] text-[#8f8f8f]">
        <FzLogo />
        <h2 className="flex-1 pl-1">키 파일을 선택하세요</h2>
        <button type="button" aria-label="닫기">
          <CloseIcon className="size-5" />
        </button>
      </header>
      <div className="flex h-[102px] shrink-0 items-center bg-white pr-3 pl-[30px]">
        <svg viewBox="0 0 26 26" className="size-[26px] shrink-0" fill="none" stroke="#999" strokeWidth="2.600" aria-hidden="true">
          <path d="M25 13H2M12 2 2 13l10 11" />
        </svg>
        <svg viewBox="0 0 26 26" className="ml-[45px] size-[26px] shrink-0" fill="none" stroke="#999" strokeWidth="2.600" aria-hidden="true">
          <path d="M1 13h23M14 2l10 11-10 11" />
        </svg>
        <Chevron className="ml-[41px] h-2.5 w-4 shrink-0 text-[#888]" />
        <svg viewBox="0 0 30 30" className="ml-[42px] size-[30px] shrink-0" fill="none" stroke="#666" strokeWidth="3" aria-hidden="true">
          <path d="M15 29V2M2 16 15 2l13 14" />
        </svg>
        <div className="ml-[31px] flex h-[81px] flex-1 items-center border border-[#d9d9d9] pl-[18px]">
          <FolderIcon />
          <span className="pb-2 pl-[17px] text-xl">«</span>
          <button type="button" className="pl-4 text-[26px]">projects</button>
          <svg viewBox="0 0 8 14" className="mx-5 h-3.5 w-2" fill="none" stroke="#555" strokeWidth="2.400" aria-hidden="true">
            <path d="m1 1 6 6-6 6" />
          </svg>
          <button type="button" className="flex-1 text-left text-[26px]">homework</button>
          <Chevron className="h-3 w-5 text-[#666]" />
          <svg viewBox="0 0 26 26" className="mr-[31px] ml-[58px] size-6" fill="none" stroke="#666" strokeWidth="2" aria-hidden="true">
            <path d="M23 3v6h-6M22 8a11 11 0 1 0 2 6" />
          </svg>
        </div>
        <div className="ml-3 flex h-[81px] w-[457px] shrink-0 items-center border border-[#d9d9d9] pr-[26px] pl-[14px]">
          <input aria-label="homework 검색" placeholder="homework 검색" className="min-w-0 flex-1 text-[27px] placeholder:text-[#6d6d6d]" />
          <svg viewBox="0 0 24 24" className="size-6" fill="none" stroke="#666" strokeWidth="3" aria-hidden="true">
            <circle cx="15" cy="9" r="7" />
            <path d="M10 14 1 23" strokeWidth="4" />
          </svg>
        </div>
      </div>
      <div className="flex h-[72px] shrink-0 items-center border-b-2 border-[#e7e8ea] bg-[#f5f6f8] pr-[33px] pl-10 text-[#1b3457]">
        <button type="button" className="flex items-center gap-2.5">
          구성
          <svg viewBox="0 0 8 5" className="h-[5px] w-2" aria-hidden="true">
            <path d="M0 0h8L4 5z" fill="#1b3457" />
          </svg>
        </button>
        <button type="button" className="flex-1 pl-[64px] text-left">새 폴더</button>
        <svg viewBox="0 0 36 36" className="size-9 bg-[#f1f1f1]" stroke="#111" strokeWidth="2.600" aria-hidden="true">
          <path d="M4 8h28M4 15h28M4 22h28M4 28h28" />
        </svg>
        <svg viewBox="0 0 8 5" className="ml-5 h-[5px] w-2" aria-hidden="true">
          <path d="M0 0h8L4 5z" fill="#1b3457" />
        </svg>
        <svg viewBox="0 0 34 28" className="ml-12 h-7 w-[34px]" aria-hidden="true">
          <rect x="1.500" y="1.500" width="31" height="25" rx="2" fill="#fff" stroke="#111" strokeWidth="3" />
          <path d="M18 3h13v22H18z" fill="#1497e6" />
        </svg>
        <button type="button" aria-label="도움말" className="ml-[47px] size-9 rounded-full bg-[#0a84d8] text-2xl leading-9 font-semibold text-white">
          ?
        </button>
      </div>
      <div className="flex min-h-0 flex-1 bg-white">
        <div className="flex w-[557px] shrink-0 flex-col overflow-hidden pl-1">
          <button type="button" className="flex h-[72px] shrink-0 items-center bg-[#d9d9d9] pl-[30px] text-[26px]">
            <svg viewBox="0 0 10 18" className="h-[18px] w-2.5" fill="none" stroke="#888" strokeWidth="2.600" aria-hidden="true">
              <path d="m1 1 8 8-8 8" />
            </svg>
            <span className="w-[34px]" />
            <FolderIcon kind="onedrive" />
            <span className="pl-2">OneDrive</span>
          </button>
          <hr className="mt-[34px] mr-[18px] mb-9 ml-[18px] shrink-0 border-t-2 border-[#d5d5d5]" />
          <ul>
            {places.map((place) => (
              <li key={place.label} className="flex h-[72px] items-center pr-2 pl-[74px]">
                <FolderIcon kind={place.kind} />
                <span className="flex-1 pl-2">{place.label}</span>
                {place.pinned && (
                  <svg viewBox="0 0 24 24" className="size-6" fill="#8f9ba3" aria-hidden="true">
                    <path d="M15 0 24 9l-4 3-2 2-1 7-6-5-8 8-2-1 7-8-5-5 8-3z" />
                  </svg>
                )}
              </li>
            ))}
          </ul>
        </div>
        <div className="flex w-[37px] shrink-0 justify-center bg-[#f0f0f0] pt-[70px]">
          <span className="h-[271px] w-[23px] bg-[#858585]" />
        </div>
        <span className="mx-0.5 w-1 shrink-0 bg-[#f5f5f5]" />
        <div className="flex min-w-0 flex-1 flex-col">
          <div className="min-h-0 flex-1 overflow-hidden pl-8">
            <table className="w-full table-fixed">
              <thead className="text-left text-[#44597a]">
                <tr className="h-[68px]">
                  <th className="relative w-[580px] pb-1 pl-[37px] font-normal">
                    이름
                    <svg viewBox="0 0 14 8" className="absolute top-0 left-[294px] h-2 w-3.5" fill="none" stroke="#555" aria-hidden="true">
                      <path d="m1 8 6-7 6 7" />
                    </svg>
                  </th>
                  <th className="border-l border-[#e3e3e3] pb-1 pl-3.5 font-normal">수정한 날짜</th>
                </tr>
              </thead>
              <tbody className="text-[26px]">
                {files.map((file) => (
                  <tr key={file.name} className="h-[72px]">
                    <td className="p-0">
                      <div className={`flex h-[62px] items-center pt-1 pl-3 ${file.folder ? "" : "bg-[#d9d9d9]"}`}>
                        {file.folder ? (
                          <FolderIcon />
                        ) : (
                          <svg viewBox="0 0 32 36" className="mb-2 h-9 w-8 shrink-0" fill="#fafafa" stroke="#8a8a8a" aria-hidden="true">
                            <path d="M4 1h17l7 8v26H4zM21 1v8h7" />
                          </svg>
                        )}
                        <span className="pl-[11px]">{file.name}</span>
                      </div>
                    </td>
                    <td className="p-0 text-[27px] text-[#6d6d6d]">
                      <div className={`flex h-[62px] items-center overflow-hidden pt-1 pl-[14px] ${file.folder ? "" : "bg-[#d9d9d9]"}`}>{file.date}</div>
                    </td>
                  </tr>
                ))}
              </tbody>
            </table>
          </div>
          <div className="flex h-[37px] shrink-0 items-center bg-[#f0f0f0] pl-[38px]">
            <span className="h-[23px] w-[421px] bg-[#858585]" />
          </div>
        </div>
      </div>
      <footer className="relative flex h-[209px] shrink-0 flex-col items-end gap-3.5 pt-[70px] pr-9">
        <div className="flex w-full items-center justify-end">
          <label htmlFor="filename" className="pr-2.5">파일 이름(N):</label>
          <div className="relative h-[46px] w-[477px]">
            <input id="filename" defaultValue="sparta_mikey.pem" className="size-full border-2 border-[#8a8a8a] bg-white pl-0.5 text-[26px]" />
            <Chevron className="absolute top-[18px] right-2.5 h-2.5 w-3.5 text-[#555]" />
          </div>
          <SelectBox id="filter" label="파일 형식" value="PEM 파일" className="ml-7 w-[422px] text-[28px]" />
        </div>
        <div className="flex gap-7">
          <button type="button" className={`h-[57px] w-[196px] ${buttonClass}`}>열기(O)</button>
          <button type="button" className={`h-[57px] w-[196px] ${buttonClass}`}>취소</button>
        </div>
        <svg viewBox="0 0 18 18" className="absolute right-1 bottom-1 size-[18px]" fill="#b8b8b8" aria-hidden="true">
          <path d="M13 0h4v4h-4zM7 6h4v4H7zM13 6h4v4h-4zM1 12h4v4H1zM7 12h4v4H7zM13 12h4v4h-4z" />
        </svg>
      </footer>
    </section>
  );
}

export default function App() {
  return (
    <div className="relative flex h-screen overflow-hidden bg-white font-['Open_Sans','Noto_Sans_CJK_KR',sans-serif] text-[29px] leading-9 text-black">
      <FileZillaWindow />
      <Browser />
      <SiteManager />
      <FileDialog />
    </div>
  );
}
